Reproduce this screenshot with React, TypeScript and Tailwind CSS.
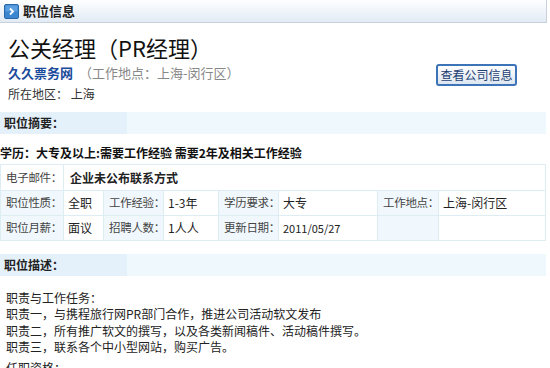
const font = { fontFamily: '"Noto Sans CJK SC", "Noto Sans", sans-serif' };

function SectionBar({ title }: { title: string }) {
  return (
    <div className="flex h-[22px] w-[546px]">
      <div className="flex w-[127px] items-center bg-[#e4f0fa] pl-[4px] text-[12px] font-bold text-[#222]">
        {title}
      </div>
      <div className="flex-1 bg-[#eff8fc]" />
    </div>
  );
}

const label =
  "whitespace-nowrap border border-[#deedf4] bg-[#f1f8fd] pl-[5px] text-left text-[11.5px] font-normal tracking-[-0.3px] text-[#444]";
const value = "whitespace-nowrap border border-[#deedf4] bg-white pl-[4px] text-left text-[#222]";

export default function App() {
  return (
    <div className="h-[368px] w-[550px] overflow-hidden bg-white text-[12px] text-[#333]" style={font}>
      <div className="flex h-[23px] w-[547px] items-center gap-[4px] border-b border-r border-[#c9d1dc] bg-gradient-to-b from-[#fdfeff] to-[#e2ebf5] pl-[4px]">
        <svg width="15" height="15" viewBox="0 0 15 15">
          <rect x="0.5" y="0.5" width="14" height="14" rx="1.5" fill="#3c86d0" stroke="#2a68aa" />
          <rect x="1.5" y="1.5" width="12" height="6" fill="#6fb0ec" opacity="0.6" />
          <path d="M6 4.5 L9 7.5 L6 10.5" stroke="#fff" strokeWidth="1.8" fill="none" />
        </svg>
        <span className="text-[13px] font-bold text-[#222]">职位信息</span>
      </div>

      <div className="flex items-start justify-between pr-[33px]">
        <div className="pl-[8px]">
          <h1 className="mt-[10px] text-[22px] leading-[28px] text-[#111]">公关经理（PR经理）</h1>
          <div className="mt-[3px] flex items-center text-[13px] leading-[18px]">
            <span className="font-bold text-[#1b4b9b]">久久票务网</span>
            <span className="ml-[6px] text-[#888]">（工作地点：上海-闵行区）</span>
          </div>
          <div className="mt-[4px] leading-[16px] text-[#333]">所在地区： 上海</div>
        </div>
        <button className="mt-[41px] h-[22px] w-[81px] rounded-[3px] border-2 border-[#3d74b8] bg-gradient-to-b from-[#ffffff] to-[#dde6f0] text-[12px] leading-[16px] text-[#1c3f74]">
          查看公司信息
        </button>
      </div>

      <div className="mt-[10px]">
        <SectionBar title="职位摘要：" />
      </div>

      <div className="mt-[11px] text-[12px] font-bold leading-[16px] text-[#111]">
        学历：大专及以上:需要工作经验 需要2年及相关工作经验
      </div>

      <table className="mt-[3px] w-[546px] table-fixed border-collapse text-[12px]">
        <colgroup>
          <col className="w-[63px]" />
          <col className="w-[40px]" />
          <col className="w-[60px]" />
          <col className="w-[55px]" />
          <col className="w-[60px]" />
          <col className="w-[99px]" />
          <col className="w-[61px]" />
          <col />
        </colgroup>
        <tbody>
          <tr className="h-[26px]">
            <th className={label + " bg-white"}>电子邮件：</th>
            <td colSpan={7} className={value + " pl-[6px] font-bold text-[#2c9a12]"}>企业未公布联系方式</td>
          </tr>
          <tr className="h-[25px]">
            <th className={label}>职位性质：</th>
            <td className={value}>全职</td>
            <th className={label}>工作经验：</th>
            <td className={value}>1-3年</td>
            <th className={label}>学历要求：</th>
            <td className={value}>大专</td>
            <th className={label}>工作地点：</th>
            <td className={value}>上海-闵行区</td>
          </tr>
          <tr className="h-[25px]">
            <th className={label}>职位月薪：</th>
            <td className={value}>面议</td>
            <th className={label}>招聘人数：</th>
            <td className={value}>1人人</td>
            <th className={label}>更新日期：</th>
            <td className={value + " text-[11px]"}>2011/05/27</td>
            <th className={label}></th>
            <td className={value}></td>
          </tr>
        </tbody>
      </table>

      <div className="mt-[13px]">
        <SectionBar title="职位描述：" />
      </div>

      <div className="mt-[14px] pl-[6px] leading-[16.3px] text-[#222]">
        <div>职责与工作任务：</div>
        <div>职责一，与携程旅行网PR部门合作，推进公司活动软文发布</div>
        <div>职责二，所有推广软文的撰写，以及各类新闻稿件、活动稿件撰写。</div>
        <div>职责三，联系各个中小型网站，购买广告。</div>
        <div className="mt-[5px]">任职资格：</div>
      </div>
    </div>
  );
}
